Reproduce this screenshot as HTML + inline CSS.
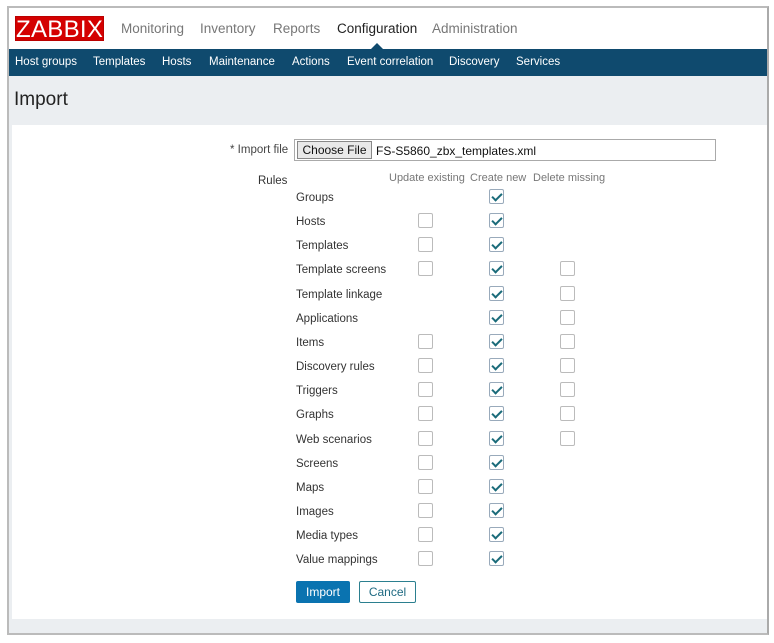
<!DOCTYPE html>
<html><head><style>
*{box-sizing:border-box;margin:0;padding:0}
body{width:774px;height:643px;background:#fff;font-family:"Liberation Sans",Arial,sans-serif;position:relative;overflow:hidden}
#f{position:absolute;left:7px;top:6px;width:762px;height:629px;border:2px solid #bbb;border-right-color:#aaa;background:#ebeef1;overflow:hidden}
.top{position:absolute;left:0;top:0;width:100%;height:41px;background:#fff}
.logo{position:absolute;left:6px;top:8px;width:89px;height:25px;background:#d40000;color:#fff;font-size:24px;line-height:25px;text-align:center;letter-spacing:0.3px;border:1px solid #b00}
.m{position:absolute;top:13px;font-size:13.5px;color:#777}
.sub{position:absolute;left:0;top:41px;width:100%;height:27px;background:#0f4a6e}
.sub span{position:absolute;top:7px;font-size:11.5px;color:#fff}
.tri{position:absolute;left:362px;top:35px;border:6px solid transparent;border-bottom-color:#0f4a6e;border-top:0}
h1{position:absolute;left:5px;top:81px;font-size:19px;font-weight:normal;color:#222}
.panel{position:absolute;left:3px;top:117px;width:756px;height:494px;background:#fff}
.l{position:absolute;font-size:11.5px;color:#333}
.cb{position:absolute;width:15px;height:15px;border:1px solid #bbb;border-radius:2px;background:#fff}
.cb.c{border-color:#9ab}
.cb.c:after{content:"";position:absolute;left:4px;top:1px;width:4px;height:8px;border:solid #1a6b7a;border-width:0 2px 2px 0;transform:rotate(45deg)}
.h{position:absolute;top:172px;font-size:11px;color:#777}
</style></head><body>
<div id="f">
<div class="top">
<div class="logo">ZABBIX</div>
<span class="m" style="left:112px">Monitoring</span>
<span class="m" style="left:191px">Inventory</span>
<span class="m" style="left:264px">Reports</span>
<span class="m" style="left:328px;color:#222">Configuration</span>
<span class="m" style="left:423px">Administration</span>
</div>
<div class="tri"></div>
<div class="sub">
<span style="left:6px">Host groups</span><span style="left:84px">Templates</span><span style="left:153px">Hosts</span><span style="left:200px">Maintenance</span><span style="left:283px">Actions</span><span style="left:338px">Event correlation</span><span style="left:440px">Discovery</span><span style="left:507px">Services</span>
</div>
<h1>Import</h1>
<div class="panel"></div>
</div>
<div class="l" style="left:230px;top:144px;color:#444">* Import file</div>
<div style="position:absolute;left:294px;top:139px;width:422px;height:22px;border:1px solid #aaa;background:#fff"></div>
<div style="position:absolute;left:297px;top:141px;width:75px;height:18px;border:1px solid #888;background:#e9e9e9;font-size:12px;line-height:16px;text-align:center;color:#111">Choose File</div>
<div class="l" style="left:376px;top:144px;color:#111;font-size:12px">FS-S5860_zbx_templates.xml</div>
<div class="l" style="left:258px;top:175px">Rules</div>
<div class="h" style="left:389px">Update existing</div>
<div class="h" style="left:470px">Create new</div>
<div class="h" style="left:533px">Delete missing</div>
<div id="rows"></div>
<div style="position:absolute;left:296px;top:581px;width:54px;height:22px;background:#0a73b0;color:#fff;font-size:12px;line-height:22px;text-align:center;border-radius:2px">Import</div>
<div style="position:absolute;left:359px;top:581px;width:57px;height:22px;border:1px solid #2b7f8f;color:#1f6a82;font-size:12px;line-height:20px;text-align:center;border-radius:2px">Cancel</div>
<script>
var r=[["Groups",0,1,0],["Hosts",1,1,0],["Templates",1,1,0],["Template screens",1,1,1],["Template linkage",0,1,1],["Applications",0,1,1],["Items",1,1,1],["Discovery rules",1,1,1],["Triggers",1,1,1],["Graphs",1,1,1],["Web scenarios",1,1,1],["Screens",1,1,0],["Maps",1,1,0],["Images",1,1,0],["Media types",1,1,0],["Value mappings",1,1,0]];
var h="";r.forEach(function(x,i){var y=190+i*24.15;h+='<div class="l" style="left:296px;top:'+(y+2)+'px">'+x[0]+'</div>';
if(x[1])h+='<div class="cb" style="left:418px;top:'+(y-1)+'px"></div>';
if(x[2])h+='<div class="cb c" style="left:489px;top:'+(y-1)+'px"></div>';
if(x[3])h+='<div class="cb" style="left:560px;top:'+(y-1)+'px"></div>';});
document.getElementById("rows").innerHTML=h;
</script>
</body></html>
